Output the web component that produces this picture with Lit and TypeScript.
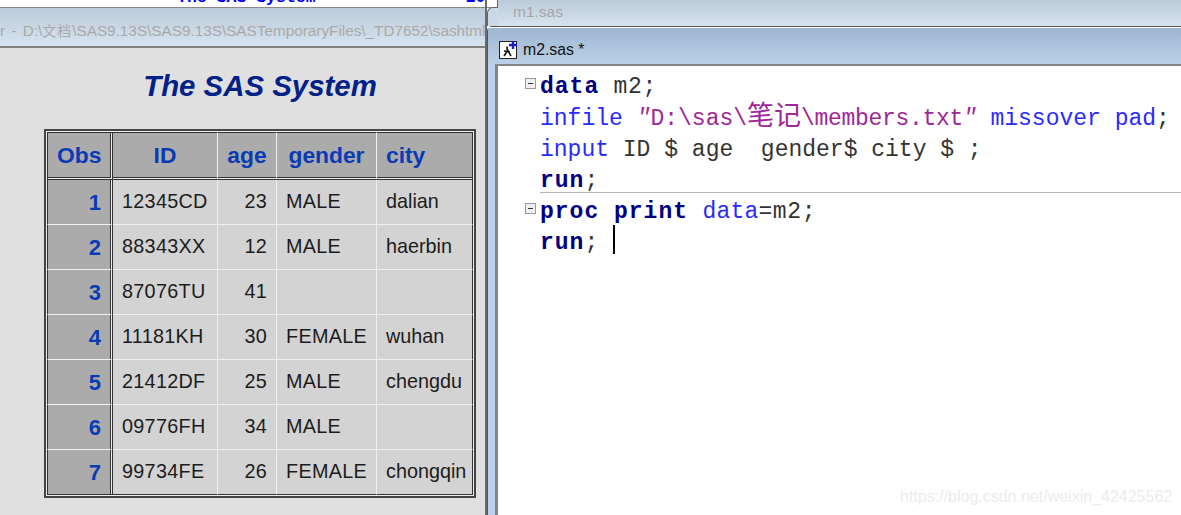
import { LitElement, html, css } from 'lit';
import { customElement } from 'lit/decorators.js';

const rows = [
  ['1', '12345CD', '23', 'MALE', 'dalian'],
  ['2', '88343XX', '12', 'MALE', 'haerbin'],
  ['3', '87076TU', '41', '', ''],
  ['4', '11181KH', '30', 'FEMALE', 'wuhan'],
  ['5', '21412DF', '25', 'MALE', 'chengdu'],
  ['6', '09776FH', '34', 'MALE', ''],
  ['7', '99734FE', '26', 'FEMALE', 'chongqin'],
];

@customElement('app-root')
export class AppRoot extends LitElement {
  static styles = css`
    :host {
      display: block;
      width: 1181px;
      height: 515px;
      overflow: hidden;
      position: relative;
      background: #fff;
    }

    .page {
      display: grid;
      grid-template-columns: 487px 1fr;
      height: 515px;
    }

    /* left window */
    .left {
      display: flex;
      flex-direction: column;
      border-right: 2px solid #6a6a6a;
      min-width: 0;
    }
    .strip {
      height: 7px;
      flex: none;
      overflow: hidden;
      background: #fff;
      border-bottom: 1px solid #888;
      display: flex;
      font: bold 16.5px/16px 'Liberation Mono', monospace;
      color: #0000ff;
      padding-left: 177px;
    }
    .strip span {
      margin-top: -10px;
      white-space: pre;
    }
    .strip .page-no {
      margin-left: 150px;
    }
    .left-title {
      height: 40px;
      flex: none;
      box-sizing: border-box;
      padding-top: 13px;
      background: linear-gradient(#bccbd9, #d6e3f0);
      border-bottom: 2px solid #808080;
      font: 15.3px/20px 'Liberation Sans', 'Noto Sans CJK SC', sans-serif;
      word-spacing: 2px;
      color: #a9a9a9;
      white-space: nowrap;
      overflow: hidden;
    }
    .left-title .cjk {
      font-size: 14px;
      letter-spacing: 1px;
    }
    .output {
      flex: 1;
      background: #e0e0e0;
      padding-left: 44px;
    }
    h1 {
      margin: 0;
      width: 432px;
      height: 81px;
      padding-top: 22px;
      box-sizing: border-box;
      text-align: center;
      font: italic bold 29.4px/32px 'Liberation Sans', sans-serif;
      color: #002288;
    }

    table {
      width: 432px;
      height: 369px;
      box-sizing: border-box;
      border-collapse: separate;
      border-spacing: 0;
      table-layout: fixed;
      border: 2px solid #444;
      padding: 1px;
      background: #eee;
      font: 19.8px/24px 'Liberation Sans', sans-serif;
      color: #1c1c1c;
    }
    th,
    td {
      box-sizing: border-box;
      padding: 0 9px;
      white-space: nowrap;
      overflow: hidden;
      background-clip: padding-box;
      border-right: 1px solid #f0f0f0;
      border-bottom: 1px solid #f0f0f0;
    }
    th {
      height: 48px;
      background-color: #ababab;
      color: #0b3bb4;
      font-size: 22.8px;
      text-align: center;
      border-top: 1px solid #333;
      border-bottom: 3px double #333;
    }
    th.left-align {
      text-align: left;
    }
    td {
      height: 45px;
      background-color: #d3d3d3;
      padding-bottom: 3px;
    }
    td.caps {
      letter-spacing: 0.3px;
    }
    tr > :first-child {
      background-color: #ababab;
      border-left: 1px solid #333;
      border-right: 3px double #333;
    }
    tr > :last-child {
      border-right: 1px solid #333;
    }
    tbody tr:last-child td {
      border-bottom: 1px solid #333;
    }
    td.obs {
      color: #0b3bb4;
      font-weight: bold;
      font-size: 22px;
      text-align: right;
      padding: 2px 9px 0 0;
    }
    td.num {
      text-align: right;
    }

    /* right side */
    .right {
      display: flex;
      flex-direction: column;
      min-width: 0;
    }
    .m1-row {
      height: 26px;
      flex: none;
      display: flex;
    }
    .m1-edge {
      width: 11px;
      flex: none;
      display: flex;
      flex-direction: column;
      background: #fff;
    }
    .m1-notch {
      height: 8px;
      flex: none;
      box-sizing: border-box;
      background: #fff;
      border-bottom: 1px solid #888;
      border-right: 1px solid #666;
    }
    .m1-corner {
      flex: 1;
      background: #cbd9e6;
      border-top: 1px solid #666;
      border-left: 1px solid #666;
      border-top-left-radius: 6px;
      margin-top: -1px;
    }
    .m1-title {
      flex: 1;
      box-sizing: border-box;
      padding: 3px 0 0 15px;
      background: linear-gradient(#bccbd9, #d6e3ef);
      font: 15.5px/18px 'Liberation Sans', sans-serif;
      color: #a6a6a6;
    }
    .m2 {
      flex: 1;
      display: flex;
      flex-direction: column;
      min-height: 0;
      background: #b9d2ea;
      border-top: 1px solid #555;
      border-left: 1px solid #555;
      border-top-left-radius: 5px;
    }
    .m2-title {
      height: 37px;
      flex: none;
      box-sizing: border-box;
      display: flex;
      align-items: center;
      gap: 5px;
      padding: 7px 0 0 11px;
      border-top: 1px solid #fff;
      background: linear-gradient(#9db6d1, #bad1e7);
      font: 15.8px/18px 'Liberation Sans', sans-serif;
      color: #111;
    }
    .m2-title svg {
      display: block;
    }
    .frame {
      flex: 1;
      padding-left: 7px;
      display: flex;
      min-height: 0;
    }
    .editor {
      flex: 1;
      background: #fff;
      border-top: 2px solid #858585;
      border-left: 3px solid #858585;
      padding-top: 6.4px;
      font: 23px/31.2px 'Liberation Mono', 'Noto Sans CJK SC', monospace;
      color: #333;
      overflow: hidden;
    }
    .line {
      display: flex;
      height: 31.2px;
      white-space: pre;
    }
    .gutter {
      width: 42px;
      flex: none;
      display: flex;
      justify-content: flex-end;
      align-items: flex-start;
      padding: 5.5px 4px 0 0;
      box-sizing: border-box;
    }
    .fold {
      width: 11px;
      height: 11px;
      box-sizing: border-box;
      border: 1px solid #9a9a9a;
      background: #efefef;
      position: relative;
    }
    .fold::after {
      content: '';
      position: absolute;
      left: 2px;
      right: 2px;
      top: 4px;
      height: 1px;
      background: #333;
    }
    .rule {
      height: 1px;
      margin: -5px 0 4px 42px;
      background: #b5b5b5;
    }
    .wide {
      letter-spacing: 0.6px;
    }
    .kw {
      font-weight: bold;
      color: #000080;
      letter-spacing: 1px;
    }
    .opt {
      color: #2a2aff;
    }
    .wide .opt {
      letter-spacing: 0.2px;
    }
    .str {
      color: #a0279a;
    }
    .quote {
      font-style: italic;
    }
    .editor .cjk {
      font-family: 'Noto Sans CJK SC', sans-serif;
      font-size: 27px;
      line-height: 0;
    }
    .tight {
      letter-spacing: -0.3px;
    }
    .caret {
      display: inline-block;
      width: 2px;
      height: 29px;
      margin-top: -8px;
      background: #000;
      vertical-align: -5px;
    }

    .watermark {
      position: absolute;
      left: 900px;
      top: 487px;
      font: 16px/20px 'Liberation Sans', sans-serif;
      color: #ececec;
    }
  `;

  render() {
    return html`
      <div class="page">
        <section class="left">
          <div class="strip"><span>The SAS System</span><span class="page-no">20</span></div>
          <div class="left-title">r - D:\\<span class="cjk">文档</span>\\SAS9.13S\\SAS9.13S\\SASTemporaryFiles\\_TD7652\\sashtml</div>
          <div class="output">
            <h1>The SAS System</h1>
            <table>
              <colgroup>
                <col style="width:66px" /><col style="width:105px" /><col style="width:59px" /><col style="width:100px" /><col />
              </colgroup>
              <thead>
                <tr>
                  <th>Obs</th>
                  <th>ID</th>
                  <th>age</th>
                  <th>gender</th>
                  <th class="left-align">city</th>
                </tr>
              </thead>
              <tbody>
                ${rows.map(
                  (r) => html`<tr>
                    <td class="obs">${r[0]}</td>
                    <td class="caps">${r[1]}</td>
                    <td class="caps num">${r[2]}</td>
                    <td class="caps">${r[3]}</td>
                    <td>${r[4]}</td>
                  </tr>`
                )}
              </tbody>
            </table>
          </div>
        </section>
        <section class="right">
          <div class="m1-row">
            <div class="m1-edge"><div class="m1-notch"></div><div class="m1-corner"></div></div>
            <div class="m1-title">m1.sas</div>
          </div>
          <div class="m2">
            <div class="m2-title">
              <svg width="19" height="19" viewBox="0 0 19 19">
                <rect x="0.5" y="1.5" width="17" height="17" fill="#fff" stroke="#222" />
                <path d="M1 1.5h14" stroke="#222" stroke-dasharray="2 1" />
                <path d="M5 16l4-6M8 9l4 7M5 11l6 1M8 6.5v3" stroke="#111" stroke-width="1.6" fill="none" />
                <path d="M10 5h8M14 1v8" stroke="#1c1cd0" stroke-width="2.4" />
              </svg>
              <span>m2.sas *</span>
            </div>
            <div class="frame">
              <div class="editor">
                <div class="line wide"><span class="gutter"><span class="fold"></span></span><span><span class="kw">data</span> m2;</span></div>
                <div class="line"><span class="gutter"></span><span><span class="opt">infile</span> <span class="str"><span class="quote">"</span>D:\\sas\\<span class="cjk">笔记</span><span class="tight">\\members.txt<span class="quote">"</span></span></span> <span class="opt">missover pad</span>;</span></div>
                <div class="line"><span class="gutter"></span><span><span class="opt">input</span> ID $ age  gender$ city $ ;</span></div>
                <div class="line wide"><span class="gutter"></span><span><span class="kw">run</span>;</span></div>
                <div class="rule"></div>
                <div class="line wide"><span class="gutter"><span class="fold"></span></span><span><span class="kw">proc print</span> <span class="opt">data</span>=m2;</span></div>
                <div class="line wide"><span class="gutter"></span><span><span class="kw">run</span>; <span class="caret"></span></span></div>
              </div>
            </div>
          </div>
        </section>
      </div>
      <div class="watermark">https://blog.csdn.net/weixin_42425562</div>
    `;
  }
}
